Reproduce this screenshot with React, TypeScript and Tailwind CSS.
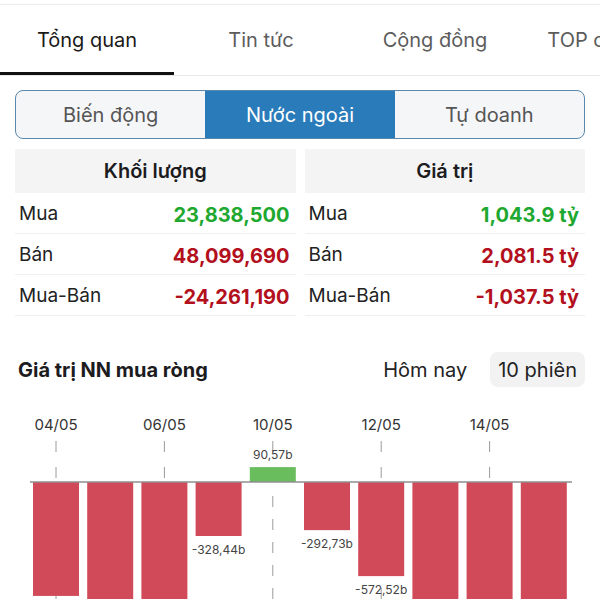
import React from "react";

const tabs = ["Tổng quan", "Tin tức", "Cộng đồng", "TOP cổ đông"];
const segs = ["Biến động", "Nước ngoài", "Tự doanh"];

type Row = { label: string; value: string; color: string };
const vol: Row[] = [
  { label: "Mua", value: "23,838,500", color: "text-[#1fa830]" },
  { label: "Bán", value: "48,099,690", color: "text-[#b3101d]" },
  { label: "Mua-Bán", value: "-24,261,190", color: "text-[#b3101d]" },
];
const val: Row[] = [
  { label: "Mua", value: "1,043.9 tỷ", color: "text-[#1fa830]" },
  { label: "Bán", value: "2,081.5 tỷ", color: "text-[#b3101d]" },
  { label: "Mua-Bán", value: "-1,037.5 tỷ", color: "text-[#b3101d]" },
];

const bars = [-693, -900, -1000, -328.44, 90.57, -292.73, -572.52, -1000, -1000, -1000];
const labels: Record<number, string> = { 3: "-328,44b", 4: "90,57b", 5: "-292,73b", 6: "-572,52b" };
const dates: [number, string][] = [
  [0, "04/05"],
  [2, "06/05"],
  [4, "10/05"],
  [6, "12/05"],
  [8, "14/05"],
];

function Column({ title, rows }: { title: string; rows: Row[] }) {
  return (
    <div className="flex flex-col">
      <div className="h-[44px] bg-[#f4f4f5] flex items-center justify-center text-[20px] font-semibold text-[#1c1c1e]">
        {title}
      </div>
      {rows.map((r) => (
        <div
          key={r.label}
          className="h-[41px] border-b border-[#efefef] flex items-center justify-between pl-[4px] pr-[6px] pt-[3px]"
        >
          <span className="text-[19px] text-[#222]">{r.label}</span>
          <span className={`text-[20px] font-bold ${r.color}`}>{r.value}</span>
        </div>
      ))}
    </div>
  );
}

export default function App() {
  const axisY = 483;
  const k = 0.1644;
  const bx = (i: number) => 33 + i * 54.2;
  return (
    <div
      className="w-[600px] h-[600px] overflow-hidden bg-white flex flex-col"
      style={{ fontFamily: "Inter, 'Noto Sans', sans-serif" }}
    >
      <div className="h-[5px] shrink-0 border-b border-[#ececec]" />
      <div className="h-[71px] shrink-0 flex overflow-hidden border-b border-[#e9e9e9]">
        {tabs.map((t, i) => (
          <div
            key={t}
            className={`relative w-[174px] shrink-0 flex items-center justify-center text-[20px] whitespace-nowrap ${
              i === 0 ? "text-[#1a1a1a]" : "text-[#5c5c5c]"
            }`}
          >
            {t}
            {i === 0 && <div className="absolute left-0 right-0 bottom-0 h-[3px] bg-[#111]" />}
          </div>
        ))}
      </div>

      <div className="mt-[14px] mx-[15px] h-[49px] shrink-0 flex rounded-[8px] border-[1.5px] border-[#5a88ac] overflow-hidden bg-[#f5f6f8]">
        {segs.map((s, i) => (
          <div
            key={s}
            className={`flex-1 flex items-center justify-center text-[20px] ${
              i === 1 ? "bg-[#2a7bba] text-white" : "text-[#555]"
            }`}
          >
            {s}
          </div>
        ))}
      </div>

      <div className="mt-[10px] px-[15px] grid grid-cols-2 gap-x-[9px] shrink-0">
        <Column title="Khối lượng" rows={vol} />
        <Column title="Giá trị" rows={val} />
      </div>

      <div className="mt-[36px] h-[35px] shrink-0 flex items-center justify-between pl-[18px] pr-[15px]">
        <span className="text-[20px] font-bold text-[#1c1c1e]">Giá trị NN mua ròng</span>
        <div className="flex items-center gap-[16px] h-full">
          <div className="h-full px-[7px] flex items-center text-[20px] text-[#222]">Hôm nay</div>
          <div className="h-full px-[8px] flex items-center rounded-[8px] bg-[#f2f2f3] text-[20px] text-[#222]">
            10 phiên
          </div>
        </div>
      </div>

      <svg width="600" height="212" viewBox="0 388 600 212" className="block shrink-0">
        {dates.map(([i, d]) => {
          const cx = bx(i) + 23;
          return (
            <g key={d}>
              <text x={cx} y={431} textAnchor="middle" fontSize="15" fill="#333">
                {d}
              </text>
              <line x1={cx} y1={442} x2={cx} y2={483} stroke="#9a9a9a" strokeWidth="1" strokeDasharray="11 15" />
              <line x1={cx} y1={497} x2={cx} y2={600} stroke="#9a9a9a" strokeWidth="1" strokeDasharray="11 12" />
            </g>
          );
        })}
        {bars.map((v, i) => {
          const h = Math.abs(v) * k;
          const x = bx(i);
          const pos = v > 0;
          return (
            <rect
              key={i}
              x={x}
              y={pos ? axisY - h : axisY}
              width={46}
              height={h}
              fill={pos ? "#6abd5d" : "#d14a59"}
            />
          );
        })}
        <line x1={30} y1={axisY} x2={572} y2={axisY} stroke="#8f8f8f" strokeWidth="1.5" />
        {bars.map((v, i) => {
          const lab = labels[i];
          if (!lab) return null;
          const h = Math.abs(v) * k;
          const cx = bx(i) + 23;
          const y = v > 0 ? axisY - h - 8 : axisY + h + 18;
          return (
            <text key={i} x={cx} y={y} textAnchor="middle" fontSize="12" fill="#444">
              {lab}
            </text>
          );
        })}
      </svg>
    </div>
  );
}
